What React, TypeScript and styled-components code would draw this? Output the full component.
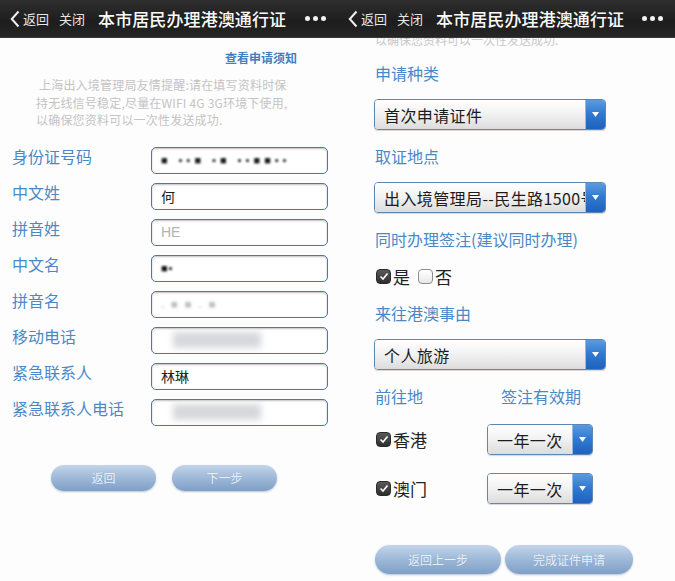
import React from 'react';
import styled, { createGlobalStyle } from 'styled-components';

const GlobalStyle = createGlobalStyle`
  html, body {
    margin: 0;
    padding: 0;
    background: #ffffff;
  }
  body {
    font-family: "Noto Sans CJK SC", "Noto Sans", "Liberation Sans", sans-serif;
  }
`;

const Screen = styled.div`
  display: flex;
  width: 675px;
  height: 581px;
  overflow: hidden;
  background: #fff;
`;

const Phone = styled.div<{ $w: number }>`
  width: ${({ $w }) => $w}px;
  flex: none;
  display: flex;
  flex-direction: column;
  overflow: hidden;
  background: #fdfdfd;
`;

/* ---------- top bar ---------- */

const TopBar = styled.div`
  position: relative;
  z-index: 2;
  height: 38px;
  flex: none;
  display: flex;
  align-items: center;
  padding-left: 10px;
  background: linear-gradient(#2e2e2e, #1d1d1d 60%, #262626);
  border-bottom: 1px solid #3a3a3a;
  box-sizing: border-box;
  color: #fff;
`;

const BackBtn = styled.div`
  display: flex;
  align-items: center;
  gap: 3px;
  font-size: 13px;
  color: #e6e6e6;
`;

const CloseBtn = styled.div`
  margin-left: 10px;
  font-size: 13px;
  color: #e6e6e6;
`;

const BarTitle = styled.div`
  margin-left: 13px;
  font-size: 17px;
  font-weight: 500;
  letter-spacing: 0.1px;
  color: #fafafa;
`;

const Dots = styled.div`
  margin-left: auto;
  margin-right: 12px;
  display: flex;
  gap: 3px;
  span {
    width: 5px;
    height: 5px;
    border-radius: 50%;
    background: #f2f2f2;
  }
`;

const Header: React.FC = () => (
  <TopBar>
    <BackBtn>
      <svg width="10" height="18" viewBox="0 0 10 18">
        <polyline points="8.5,1.5 1.8,9 8.5,16.5" fill="none" stroke="#f0f0f0" strokeWidth="2" />
      </svg>
      返回
    </BackBtn>
    <CloseBtn>关闭</CloseBtn>
    <BarTitle>本市居民办理港澳通行证</BarTitle>
    <Dots>
      <span />
      <span />
      <span />
    </Dots>
  </TopBar>
);

/* ---------- left screen ---------- */

const LeftBody = styled.div`
  display: flex;
  flex-direction: column;
  padding-top: 12px;
`;

const NoticeLink = styled.div`
  align-self: flex-end;
  margin-right: 41px;
  font-size: 12px;
  line-height: 16px;
  font-weight: 700;
  color: #3f7fc1;
`;

const Notice = styled.div`
  margin-top: 10px;
  padding-left: 36px;
  font-size: 12px;
  line-height: 17.5px;
  color: #c4c4c4;
  letter-spacing: 0.2px;
  white-space: nowrap;
  div:first-child {
    padding-left: 3px;
  }
`;

const Form = styled.div`
  margin-top: 18px;
  padding-left: 12px;
  display: grid;
  grid-template-columns: 139px 177px;
  grid-auto-rows: 27px;
  row-gap: 9px;
`;

const FieldLabel = styled.div`
  align-self: start;
  margin-top: -1px;
  font-size: 16px;
  line-height: 20px;
  color: #4a88c8;
  white-space: nowrap;
`;

const Field = styled.div`
  position: relative;
  display: flex;
  align-items: center;
  padding-left: 9px;
  border: 1px solid #4d78a6;
  border-radius: 5px;
  background: #fff;
  box-shadow: inset 0 1px 2px rgba(0, 0, 0, 0.25);
  font-size: 14px;
  color: #222;
  overflow: hidden;
  white-space: nowrap;
`;

const Placeholder = styled.span`
  color: #b3b3b3;
  font-family: "Liberation Sans", sans-serif;
`;

const Blurred = styled.span<{ $tone: string; $blur: number; $gap: number }>`
  color: ${({ $tone }) => $tone};
  filter: blur(${({ $blur }) => $blur}px);
  font-family: "Liberation Sans", sans-serif;
  font-size: 11px;
  font-weight: 700;
  letter-spacing: ${({ $gap }) => $gap}px;
  white-space: nowrap;
`;

const Smudge = styled.span<{ $w: number }>`
  margin-left: 12px;
  width: ${({ $w }) => $w}px;
  height: 16px;
  background: #d6d8dc;
  filter: blur(3px);
`;

const FormButtons = styled.div`
  margin-top: 39px;
  padding-left: 51px;
  display: flex;
  gap: 16px;
`;

const PillButton = styled.div<{ $w: number; $h: number }>`
  width: ${({ $w }) => $w}px;
  height: ${({ $h }) => $h}px;
  border-radius: ${({ $h }) => $h / 2}px;
  display: flex;
  align-items: center;
  justify-content: center;
  background: linear-gradient(#c3d5ea, #9db8d8 50%, #7f9fc7);
  box-shadow: 0 1px 2px rgba(60, 90, 130, 0.35);
  font-size: 12px;
  color: #e9f0f8;
  text-shadow: 0 0 1px rgba(120, 150, 190, 0.6);
`;

const fields: { label: string; value: React.ReactNode }[] = [
  { label: '身份证号码', value: <Blurred $tone="#1a1a1a" $blur={1.1} $gap={4}>■ ▪▪■ ▪■ ▪▪■■▪▪</Blurred> },
  { label: '中文姓', value: '何' },
  { label: '拼音姓', value: <Placeholder>HE</Placeholder> },
  { label: '中文名', value: <Blurred $tone="#111" $blur={1.2} $gap={1}>■▪</Blurred> },
  { label: '拼音名', value: <Blurred $tone="#b8b8b8" $blur={1.4} $gap={2}>. ■ ■ . ■</Blurred> },
  { label: '移动电话', value: <Smudge $w={88} /> },
  { label: '紧急联系人', value: '林琳' },
  { label: '紧急联系人电话', value: <Smudge $w={88} /> },
];

const LeftScreen: React.FC = () => (
  <Phone $w={338}>
    <Header />
    <LeftBody>
      <NoticeLink>查看申请须知</NoticeLink>
      <Notice>
        <div>上海出入境管理局友情提醒:请在填写资料时保</div>
        <div>持无线信号稳定,尽量在WIFI 4G 3G环境下使用,</div>
        <div>以确保您资料可以一次性发送成功.</div>
      </Notice>
      <Form>
        {fields.map((f) => (
          <React.Fragment key={f.label}>
            <FieldLabel>{f.label}</FieldLabel>
            <Field>{f.value}</Field>
          </React.Fragment>
        ))}
      </Form>
      <FormButtons>
        <PillButton $w={105} $h={26}>返回</PillButton>
        <PillButton $w={105} $h={26}>下一步</PillButton>
      </FormButtons>
    </LeftBody>
  </Phone>
);

/* ---------- right screen ---------- */

const ScrolledText = styled.div`
  height: 8px;
  overflow: hidden;
  display: flex;
  align-items: flex-end;
  padding-left: 37px;
  font-size: 12px;
  line-height: 16px;
  color: #c8c8c8;
  white-space: nowrap;
  span {
    margin-bottom: -2px;
  }
`;

const RightBody = styled.div`
  display: flex;
  flex-direction: column;
  gap: 15px;
  padding: 16px 0 0 36px;
`;

const SectionLabel = styled.div`
  font-size: 16px;
  line-height: 22px;
  color: #4a88c8;
  padding-left: 1px;
  white-space: nowrap;
`;

const SelectBox = styled.div<{ $w: number }>`
  width: ${({ $w }) => $w}px;
  height: 31px;
  flex: none;
  display: flex;
  border: 1px solid #5f86b3;
  border-radius: 4px;
  box-sizing: border-box;
  overflow: hidden;
  box-shadow: 0 1px 1px rgba(0, 0, 0, 0.15);
`;

const SelectText = styled.div`
  flex: 1;
  min-width: 0;
  display: flex;
  align-items: center;
  padding-left: 9px;
  background: linear-gradient(#ffffff, #f3f3f3 45%, #dcdcdc);
  font-size: 16px;
  letter-spacing: 0.4px;
  color: #1c1c1c;
  white-space: nowrap;
  overflow: hidden;
`;

const SelectArrow = styled.div`
  width: 19px;
  flex: none;
  display: flex;
  align-items: center;
  justify-content: center;
  border-left: 1px solid #9ab8dc;
  background: linear-gradient(#5b9be0, #2f78d0 50%, #1e62bd);
`;

const Select: React.FC<{ width: number; children: React.ReactNode }> = ({ width, children }) => (
  <SelectBox $w={width}>
    <SelectText>{children}</SelectText>
    <SelectArrow>
      <svg width="7" height="5" viewBox="0 0 7 5">
        <polygon points="0,0 7,0 3.5,5" fill="#fff" />
      </svg>
    </SelectArrow>
  </SelectBox>
);

const CheckRow = styled.div`
  height: 22px;
  display: flex;
  align-items: center;
  padding-left: 2px;
  font-size: 17px;
  color: #222;
`;

const CheckItem = styled.label`
  display: flex;
  align-items: center;
  gap: 2px;
  margin-right: 8px;
`;

const Box = styled.span<{ $on: boolean }>`
  width: 15px;
  height: 15px;
  box-sizing: border-box;
  border-radius: 4px;
  display: flex;
  align-items: center;
  justify-content: center;
  background: ${({ $on }) => ($on ? 'linear-gradient(#5a5a5a, #2e2e2e)' : 'linear-gradient(#fff, #e8e8e8)')};
  border: 1px solid ${({ $on }) => ($on ? '#2a2a2a' : '#8c8c8c')};
`;

const Check: React.FC<{ on: boolean; label: string }> = ({ on, label }) => (
  <CheckItem>
    <Box $on={on}>
      {on && (
        <svg width="10" height="9" viewBox="0 0 10 9">
          <polyline points="1.5,4.5 4,7 8.5,1.5" fill="none" stroke="#fff" strokeWidth="1.6" />
        </svg>
      )}
    </Box>
    {label}
  </CheckItem>
);

const TwoCol = styled.div`
  display: grid;
  grid-template-columns: 126px auto;
`;

const DestGroup = styled.div`
  display: flex;
  flex-direction: column;
  gap: 18px;
  margin-top: 2px;
`;

const DestRow = styled.div`
  display: grid;
  grid-template-columns: 113px 106px;
  align-items: center;
  ${CheckRow} {
    height: 31px;
  }
`;

const FinalButtons = styled.div`
  margin-top: 26px;
  padding-left: 1px;
  display: flex;
  gap: 4px;
`;

const RightScreen: React.FC = () => (
  <Phone $w={337}>
    <Header />
    <ScrolledText>
      <span>以确保您资料可以一次性发送成功.</span>
    </ScrolledText>
    <RightBody>
      <SectionLabel>申请种类</SectionLabel>
      <Select width={232}>首次申请证件</Select>
      <SectionLabel>取证地点</SectionLabel>
      <Select width={232}>出入境管理局--民生路1500号</Select>
      <SectionLabel>同时办理签注(建议同时办理)</SectionLabel>
      <CheckRow>
        <Check on label="是" />
        <Check on={false} label="否" />
      </CheckRow>
      <SectionLabel>来往港澳事由</SectionLabel>
      <Select width={232}>个人旅游</Select>
      <TwoCol>
        <SectionLabel>前往地</SectionLabel>
        <SectionLabel>签注有效期</SectionLabel>
      </TwoCol>
      <DestGroup>
        <DestRow>
          <CheckRow>
            <Check on label="香港" />
          </CheckRow>
          <Select width={106}>一年一次</Select>
        </DestRow>
        <DestRow>
          <CheckRow>
            <Check on label="澳门" />
          </CheckRow>
          <Select width={106}>一年一次</Select>
        </DestRow>
      </DestGroup>
      <FinalButtons>
        <PillButton $w={126} $h={29}>返回上一步</PillButton>
        <PillButton $w={128} $h={29}>完成证件申请</PillButton>
      </FinalButtons>
    </RightBody>
  </Phone>
);

const App: React.FC = () => (
  <>
    <GlobalStyle />
    <Screen>
      <LeftScreen />
      <RightScreen />
    </Screen>
  </>
);

export default App;
